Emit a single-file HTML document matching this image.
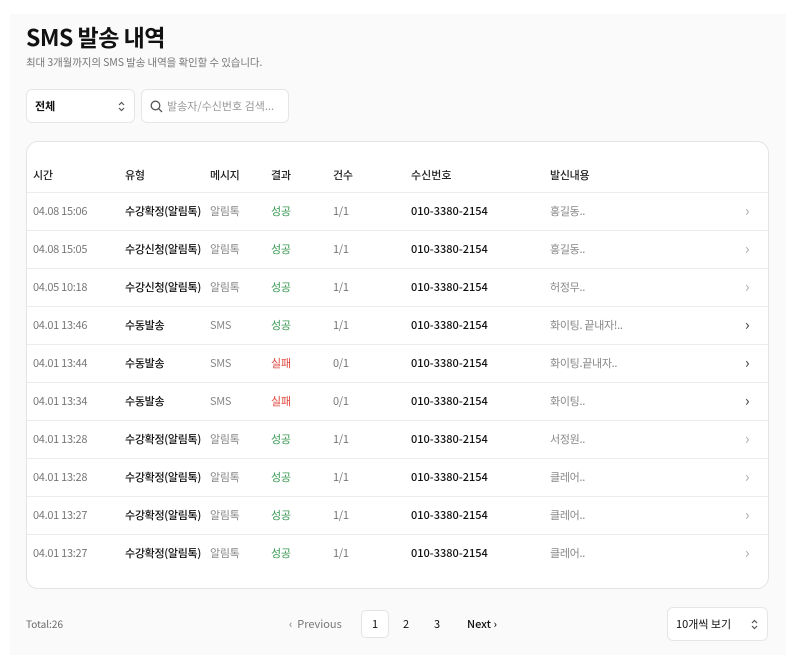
<!DOCTYPE html>
<html><head><meta charset="utf-8"><style>
*{box-sizing:border-box;margin:0;padding:0}
body{width:800px;height:655px;background:#fff;font-family:"Noto Sans CJK KR","Liberation Sans",sans-serif;position:relative;overflow:hidden;color:#111}
.panel{position:absolute;left:10px;top:14px;width:776px;height:641px;background:#fafafa}
h1{position:absolute;left:26px;top:19px;font-size:23px;line-height:34px;font-weight:700;letter-spacing:-0.5px}
.sub{position:absolute;left:26px;top:55px;font-size:10.5px;line-height:16px;color:#777;letter-spacing:-0.1px}
.sel{position:absolute;left:26px;top:89px;width:109px;height:34px;border:1px solid #e6e6e6;border-radius:6px;background:#fff;font-size:11px;line-height:32px;font-weight:700;padding:0 8px}
.srch{position:absolute;left:141px;top:89px;width:148px;height:34px;border:1px solid #e6e6e6;border-radius:6px;background:#fff;font-size:11px;line-height:32px;color:#999;padding:0 0 0 25px}
.card{position:absolute;left:26px;top:141px;width:743px;height:448px;border:1px solid #e4e4e4;border-radius:12px;background:#fff}
.row{position:absolute;left:0;width:741px;height:38px;border-top:1px solid #ececec;font-size:11px;letter-spacing:-0.3px}
.row span{position:absolute;top:0;line-height:36px}
.hd{font-weight:500;color:#222}
.c1{left:6px;color:#777}.c2{left:98px;font-weight:500}.c3{left:183px;color:#888}.c4{left:244px}.c5{left:306px;color:#777}.c6{left:384px;font-weight:500;letter-spacing:0}.c7{left:523px;color:#888}.c8{left:718px;color:#aaa;font-size:15px}
.ok{color:#3a9a55}.no{color:#e0473d}
.foot{position:absolute;top:615px;font-size:11px;line-height:18px}
.pg1{position:absolute;left:361px;top:610px;width:28px;height:28px;border:1px solid #e4e4e4;border-radius:5px;background:#fff;font-size:11px;text-align:center;line-height:26px}
.pp{position:absolute;left:667px;top:607px;width:101px;height:34px;border:1px solid #e6e6e6;border-radius:6px;background:#fff;font-size:11px;line-height:32px;padding:0 8px}
</style></head><body>
<div class="panel"></div>
<h1>SMS 발송 내역</h1>
<div class="sub">최대 3개월까지의 SMS 발송 내역을 확인할 수 있습니다.</div>
<div class="sel">전체<svg style="position:absolute;right:8px;top:11px" width="9" height="11" viewBox="0 0 9 11"><path d="M2 4l2.5-2.5L7 4M2 7l2.5 2.5L7 7" fill="none" stroke="#555" stroke-width="1.2"/></svg></div>
<div class="srch"><svg style="position:absolute;left:8px;top:10px" width="13" height="13" viewBox="0 0 13 13"><circle cx="5.5" cy="5.5" r="4.3" fill="none" stroke="#555" stroke-width="1.3"/><path d="M8.7 8.7L12 12" stroke="#555" stroke-width="1.3"/></svg>발송자/수신번호 검색...</div>
<div class="card">
<div class="row hd" style="top:15px;border-top:none"><span class="c1" style="color:#222">시간</span><span class="c2">유형</span><span class="c3" style="color:#222">메시지</span><span class="c4">결과</span><span class="c5" style="color:#222">건수</span><span class="c6">수신번호</span><span class="c7" style="color:#222">발신내용</span></div>
<div class="row" style="top:50px"><span class="c1">04.08 15:06</span><span class="c2">수강확정(알림톡)</span><span class="c3">알림톡</span><span class="c4 ok">성공</span><span class="c5">1/1</span><span class="c6">010-3380-2154</span><span class="c7">홍길동..</span><span class="c8">›</span></div>
<div class="row" style="top:88px"><span class="c1">04.08 15:05</span><span class="c2">수강신청(알림톡)</span><span class="c3">알림톡</span><span class="c4 ok">성공</span><span class="c5">1/1</span><span class="c6">010-3380-2154</span><span class="c7">홍길동..</span><span class="c8">›</span></div>
<div class="row" style="top:126px"><span class="c1">04.05 10:18</span><span class="c2">수강신청(알림톡)</span><span class="c3">알림톡</span><span class="c4 ok">성공</span><span class="c5">1/1</span><span class="c6">010-3380-2154</span><span class="c7">허정무..</span><span class="c8">›</span></div>
<div class="row" style="top:164px"><span class="c1">04.01 13:46</span><span class="c2">수동발송</span><span class="c3">SMS</span><span class="c4 ok">성공</span><span class="c5">1/1</span><span class="c6">010-3380-2154</span><span class="c7">화이팅. 끝내자!..</span><span class="c8" style="color:#333">›</span></div>
<div class="row" style="top:202px"><span class="c1">04.01 13:44</span><span class="c2">수동발송</span><span class="c3">SMS</span><span class="c4 no">실패</span><span class="c5">0/1</span><span class="c6">010-3380-2154</span><span class="c7">화이팅.끝내자..</span><span class="c8" style="color:#333">›</span></div>
<div class="row" style="top:240px"><span class="c1">04.01 13:34</span><span class="c2">수동발송</span><span class="c3">SMS</span><span class="c4 no">실패</span><span class="c5">0/1</span><span class="c6">010-3380-2154</span><span class="c7">화이팅..</span><span class="c8" style="color:#333">›</span></div>
<div class="row" style="top:278px"><span class="c1">04.01 13:28</span><span class="c2">수강확정(알림톡)</span><span class="c3">알림톡</span><span class="c4 ok">성공</span><span class="c5">1/1</span><span class="c6">010-3380-2154</span><span class="c7">서정원..</span><span class="c8">›</span></div>
<div class="row" style="top:316px"><span class="c1">04.01 13:28</span><span class="c2">수강확정(알림톡)</span><span class="c3">알림톡</span><span class="c4 ok">성공</span><span class="c5">1/1</span><span class="c6">010-3380-2154</span><span class="c7">클레어..</span><span class="c8">›</span></div>
<div class="row" style="top:354px"><span class="c1">04.01 13:27</span><span class="c2">수강확정(알림톡)</span><span class="c3">알림톡</span><span class="c4 ok">성공</span><span class="c5">1/1</span><span class="c6">010-3380-2154</span><span class="c7">클레어..</span><span class="c8">›</span></div>
<div class="row" style="top:392px"><span class="c1">04.01 13:27</span><span class="c2">수강확정(알림톡)</span><span class="c3">알림톡</span><span class="c4 ok">성공</span><span class="c5">1/1</span><span class="c6">010-3380-2154</span><span class="c7">클레어..</span><span class="c8">›</span></div>
</div>
<div class="foot" style="left:26px;font-size:10px;color:#666">Total:26</div>
<div class="foot" style="left:289px;color:#777">‹ &nbsp;Previous</div>
<div class="pg1">1</div>
<div class="foot" style="left:403px">2</div>
<div class="foot" style="left:434px">3</div>
<div class="foot" style="left:467px;font-weight:500">Next ›</div>
<div class="pp">10개씩 보기<svg style="position:absolute;right:8px;top:11px" width="9" height="11" viewBox="0 0 9 11"><path d="M2 4l2.5-2.5L7 4M2 7l2.5 2.5L7 7" fill="none" stroke="#555" stroke-width="1.2"/></svg></div>
</body></html>
